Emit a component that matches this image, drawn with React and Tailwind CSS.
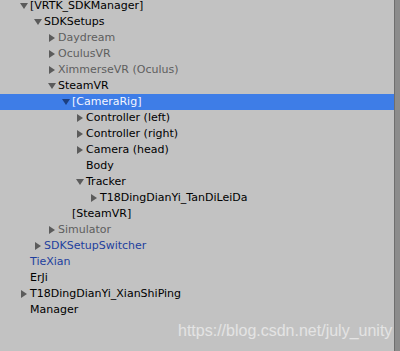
import React from 'react';

const rows = [
  { name: '[VRTK_SDKManager]', level: 0, arrow: 'down' },
  { name: 'SDKSetups', level: 1, arrow: 'down' },
  { name: 'Daydream', level: 2, arrow: 'right', tone: 'off' },
  { name: 'OculusVR', level: 2, arrow: 'right', tone: 'off' },
  { name: 'XimmerseVR (Oculus)', level: 2, arrow: 'right', tone: 'off' },
  { name: 'SteamVR', level: 2, arrow: 'down' },
  { name: '[CameraRig]', level: 3, arrow: 'down', selected: true },
  { name: 'Controller (left)', level: 4, arrow: 'right' },
  { name: 'Controller (right)', level: 4, arrow: 'right' },
  { name: 'Camera (head)', level: 4, arrow: 'right' },
  { name: 'Body', level: 4 },
  { name: 'Tracker', level: 4, arrow: 'down' },
  { name: 'T18DingDianYi_TanDiLeiDa', level: 5, arrow: 'right' },
  { name: '[SteamVR]', level: 3 },
  { name: 'Simulator', level: 2, arrow: 'right', tone: 'off' },
  { name: 'SDKSetupSwitcher', level: 1, arrow: 'right', tone: 'prefab' },
  { name: 'TieXian', level: 0, tone: 'prefab' },
  { name: 'ErJi', level: 0 },
  { name: 'T18DingDianYi_XianShiPing', level: 0, arrow: 'right' },
  { name: 'Manager', level: 0 },
];

const indents = ['pl-[19px]', 'pl-[33px]', 'pl-[47px]', 'pl-[61px]', 'pl-[75px]', 'pl-[89px]'];

const Arrow = ({ dir, selected }) => {
  const fill = selected ? '#1c3f80' : '#5b5b5b';
  return (
    <svg width="10" height="16" viewBox="0 0 10 16" className="shrink-0">
      {dir === 'down' ? (
        <polygon points="1,5 9,5 5,11" fill={fill} />
      ) : dir === 'right' ? (
        <polygon points="2,4 8,8 2,12" fill={fill} />
      ) : null}
    </svg>
  );
};

const Row = ({ row }) => {
  const color = row.selected
    ? 'text-[#f4f6ff]'
    : row.tone === 'off'
    ? 'text-[#5e5e5e]'
    : row.tone === 'prefab'
    ? 'text-[#1e3f9e]'
    : 'text-black';
  return (
    <div
      className={`flex h-4 items-center ${indents[row.level]} ${
        row.selected ? 'bg-[#3e7de7]' : ''
      }`}
    >
      <Arrow dir={row.arrow} selected={row.selected} />
      <span className={`ml-px whitespace-pre leading-4 ${color}`}>{row.name}</span>
    </div>
  );
};

export default function App() {
  return (
    <div
      className="relative flex h-[351px] w-[400px] overflow-hidden bg-[#c2c2c2] text-[11px]"
      style={{ fontFamily: '"DejaVu Sans", sans-serif' }}
    >
      <div className="flex-1 -mt-[2px]">
        {rows.map((row) => (
          <Row key={row.name + row.level} row={row} />
        ))}
      </div>
      <div className="w-[6px] border-l border-[#6e6e6e] bg-[#8c8c8c]" />
      <div
        className="absolute left-[178px] top-[321px] text-[16px] leading-5 text-white/55"
        style={{ fontFamily: '"Liberation Sans", Arial, sans-serif' }}
      >
        https://blog.csdn.net/july_unity
      </div>
    </div>
  );
}
